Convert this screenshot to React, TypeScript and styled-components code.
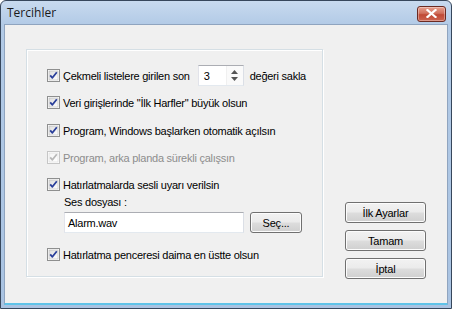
import React from 'react';
import styled, { createGlobalStyle } from 'styled-components';

const Global = createGlobalStyle`
  html, body { margin: 0; padding: 0; background: #ffffff; }
  body { font-family: "Liberation Sans", Arial, sans-serif; }
`;

const Frame = styled.div`
  box-sizing: border-box;
  width: 452px;
  height: 309px;
  display: flex;
  flex-direction: column;
  border: 1px solid #37475c;
  border-radius: 6px 6px 0 0;
  background: linear-gradient(#c8daef, #b2cae6 24px, #a9c3e2);
  overflow: hidden;
`;

const TitleBar = styled.div`
  height: 23px;
  display: flex;
  align-items: center;
  justify-content: space-between;
  padding: 0 5px 0 6px;
  font-family: "Open Sans", "DejaVu Sans", sans-serif;
  font-size: 12px;
  color: #1a1a1a;
`;

const CloseButton = styled.div`
  width: 29px;
  height: 16px;
  margin-top: 2px;
  box-sizing: border-box;
  border: 1px solid #6b2a22;
  border-radius: 3px;
  background: linear-gradient(#e8a08e, #d0705d 45%, #c04a36 55%, #cc6450);
  display: flex;
  align-items: center;
  justify-content: center;
  box-shadow: inset 0 0 0 1px rgba(255, 255, 255, 0.35);
`;

const Client = styled.div`
  flex: 1;
  margin: 0 3px 3px 3px;
  background: #f0f0f0;
  border: 1px solid #8fa4bf;
  border-bottom: 2px solid #5fc3e8;
  display: flex;
  align-items: flex-end;
  padding: 24px 0 24px 21px;
`;

const Group = styled.div`
  box-sizing: border-box;
  align-self: flex-start;
  width: 297px;
  height: 228px;
  border: 1px solid #d5dfe5;
  box-shadow: inset 1px 1px 0 #ffffff, 1px 1px 0 #ffffff;
  padding: 12px 0 0 20px;
  display: flex;
  flex-direction: column;
  font-family: "Liberation Sans", Arial, sans-serif;
  font-size: 11px;
  color: #000;
`;

const Row = styled.div<{ $gap?: number }>`
  height: 27px;
  display: flex;
  align-items: center;
  gap: 3px;
  margin-top: ${({ $gap }) => $gap ?? 0}px;
`;

const Label = styled.span<{ $disabled?: boolean }>`
  color: ${({ $disabled }) => ($disabled ? '#8d8d8d' : '#000')};
  white-space: nowrap;
  letter-spacing: -0.25px;
`;

const Sub = styled.div`
  margin-top: -4px;
  padding-left: 17px;
  display: flex;
  flex-direction: column;
`;

const SubLabel = styled.div`
  height: 16px;
  line-height: 16px;
  margin: 0 0 2px 0;
  letter-spacing: -0.25px;
`;

const FileRow = styled.div`
  display: flex;
  gap: 6px;
  align-items: center;
`;

const TextBox = styled.div<{ $width: number }>`
  box-sizing: border-box;
  width: ${({ $width }) => $width}px;
  height: 21px;
  background: #fff;
  border: 1px solid #abadb3;
  border-left-color: #e2e3ea;
  border-right-color: #dbdfe6;
  border-bottom-color: #e3e9ef;
  display: flex;
  align-items: center;
  padding-left: 3px;
  letter-spacing: -0.25px;
`;

const Spin = styled(TextBox)`
  margin: 0 3px 0 5px;
  padding-left: 5px;
  justify-content: space-between;
  padding-right: 0;
`;

const SpinArrows = styled.div`
  width: 16px;
  height: 19px;
  display: flex;
  flex-direction: column;
  align-items: center;
  justify-content: center;
  gap: 3px;
  background: #fafafa;
  border-left: 1px solid #f0f0f0;
`;

const Button = styled.div<{ $width: number }>`
  box-sizing: border-box;
  width: ${({ $width }) => $width}px;
  height: 21px;
  border: 1px solid #707070;
  border-radius: 3px;
  background: linear-gradient(#f2f2f2, #ebebeb 48%, #dddddd 52%, #cfcfcf);
  box-shadow: inset 0 0 0 1px #fcfcfc;
  display: flex;
  align-items: center;
  justify-content: center;
  font-family: "Liberation Sans", Arial, sans-serif;
  font-size: 11px;
  letter-spacing: -0.2px;
  color: #000;
`;

const ButtonColumn = styled.div`
  margin-left: 22px;
  display: flex;
  flex-direction: column;
  gap: 7px;
`;

function CheckBox({ disabled }: { disabled?: boolean }) {
  const id = disabled ? 'cbd' : 'cb';
  return (
    <svg width="13" height="13" viewBox="0 0 13 13" style={{ flexShrink: 0 }}>
      <defs>
        <linearGradient id={id} x1="0" y1="0" x2="1" y2="1">
          <stop offset="0" stopColor={disabled ? '#f4f4f4' : '#dcdcdc'} />
          <stop offset="1" stopColor="#ffffff" />
        </linearGradient>
      </defs>
      <rect x="0.5" y="0.5" width="12" height="12" fill="#fff" stroke={disabled ? '#c6c6c6' : '#8e8f8f'} />
      <rect x="2" y="2" width="9" height="9" fill={`url(#${id})`} stroke={disabled ? '#dadada' : '#b9b9b9'} strokeWidth="0.6" />
      <path
        d="M3.2 6.3 L5.4 8.8 L9.8 3.2"
        fill="none"
        stroke={disabled ? '#b8b8b8' : '#2a3f9a'}
        strokeWidth="1.8"
        strokeLinejoin="round"
      />
    </svg>
  );
}

function Check({ text, disabled, gap }: { text: string; disabled?: boolean; gap?: number }) {
  return (
    <Row $gap={gap}>
      <CheckBox disabled={disabled} />
      <Label $disabled={disabled}>{text}</Label>
    </Row>
  );
}

export default function App() {
  return (
    <>
      <Global />
      <Frame>
        <TitleBar>
          <span>Tercihler</span>
          <CloseButton>
            <svg width="11" height="9" viewBox="0 0 11 9">
              <path d="M1.5 1 L9.5 8 M9.5 1 L1.5 8" stroke="#fff" strokeWidth="2.2" strokeLinecap="square" />
            </svg>
          </CloseButton>
        </TitleBar>
        <Client>
          <Group>
            <Row>
              <CheckBox />
              <Label>Çekmeli listelere girilen son</Label>
              <Spin $width={46}>
                <span>3</span>
                <SpinArrows>
                  <svg width="7" height="4" viewBox="0 0 7 4"><path d="M0 4 L3.5 0 L7 4 Z" fill="#555" /></svg>
                  <svg width="7" height="4" viewBox="0 0 7 4"><path d="M0 0 L3.5 4 L7 0 Z" fill="#555" /></svg>
                </SpinArrows>
              </Spin>
              <Label>değeri sakla</Label>
            </Row>
            <Check text={'Veri girişlerinde "İlk Harfler" büyük olsun'} />
            <Check text="Program, Windows başlarken otomatik açılsın" gap={1} />
            <Check text="Program, arka planda sürekli çalışsın" disabled />
            <Check text="Hatırlatmalarda sesli uyarı verilsin" />
            <Sub>
              <SubLabel>Ses dosyası :</SubLabel>
              <FileRow>
                <TextBox $width={180}>Alarm.wav</TextBox>
                <Button $width={52}>Seç...</Button>
              </FileRow>
            </Sub>
            <Check text="Hatırlatma penceresi daima en üstte olsun" gap={8} />
          </Group>
          <ButtonColumn>
            <Button $width={81}>İlk Ayarlar</Button>
            <Button $width={81}>Tamam</Button>
            <Button $width={81}>İptal</Button>
          </ButtonColumn>
        </Client>
      </Frame>
    </>
  );
}
